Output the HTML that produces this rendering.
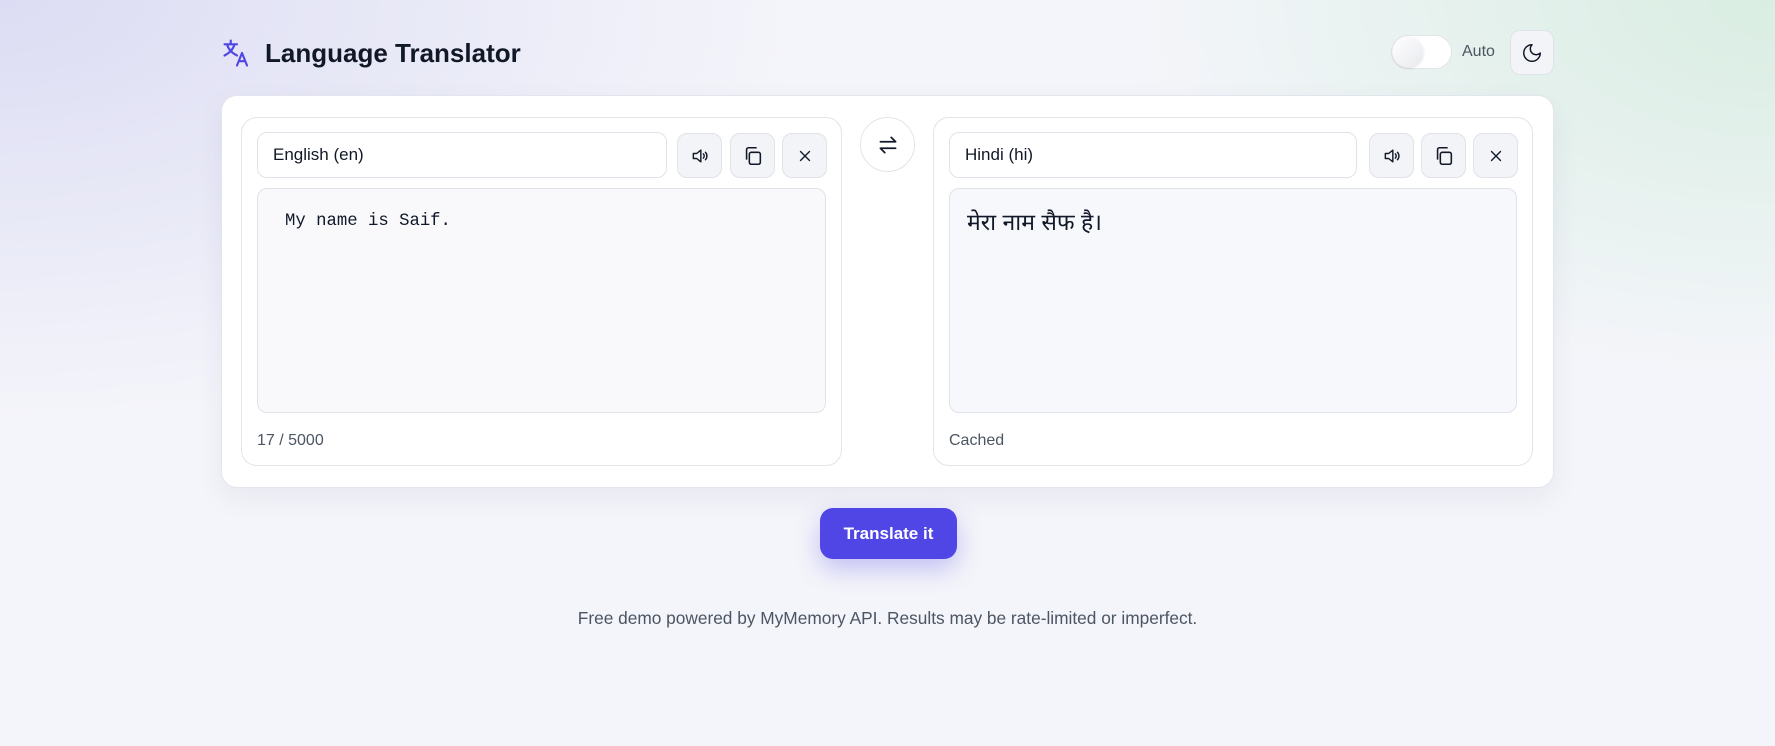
<!DOCTYPE html>
<html><head><meta charset="utf-8"><style>
*{box-sizing:border-box;margin:0;padding:0}
body{width:1775px;height:746px;overflow:hidden;font-family:"Liberation Sans",sans-serif;color:#0f172a;
background:radial-gradient(ellipse 800px 420px at 0px 0px,rgba(214,214,242,.8),rgba(214,214,242,0)),radial-gradient(ellipse 650px 380px at 1775px 0px,rgba(212,236,222,.85),rgba(212,236,222,0)),#f4f5fa;position:relative}
.abs{position:absolute}
.title{left:265px;top:38px;font-size:26px;font-weight:700;color:#111827}
.card{left:221px;top:95px;width:1333px;height:393px;background:#fff;border:1px solid #e3e5ec;border-radius:16px;box-shadow:0 10px 30px rgba(30,40,80,.06)}
.panel{top:117px;width:601px;height:349px;border:1px solid #e2e4ea;border-radius:16px;background:#fff}
.sel{top:132px;height:46px;border:1px solid #dfe2e8;border-radius:10px;background:#fff;font-size:17px;padding-left:15px;line-height:44px;color:#111827}
.btn{top:133px;width:45px;height:45px;border:1px solid #dfe2e8;border-radius:10px;background:#f3f4f8;display:flex;align-items:center;justify-content:center}
.ta{top:188px;width:569px;height:225px;border:1px solid #dfe2e8;border-radius:10px;background:#f9f9fc}
.meta{top:432px;font-size:16px;color:#4b5563}
</style></head><body>
<svg class="abs" style="left:222px;top:38px" width="30" height="30" viewBox="0 0 24 24" fill="none" stroke="#4f46e5" stroke-width="1.7" stroke-linecap="round" stroke-linejoin="round"><path d="M2 5h10M7 2v3M4 5c1 4 4 7 8 9M10 5c-1 4-4 7-8 9"/><path d="M12 22l4-10 4 10M13.5 18.5h5"/></svg>
<div class="abs title">Language Translator</div>
<div class="abs" style="left:1391px;top:35px;width:61px;height:34px;border-radius:17px;background:#fff;border:1px solid #e2e4ea"></div>
<div class="abs" style="left:1393px;top:37px;width:30px;height:30px;border-radius:50%;background:linear-gradient(135deg,#fff,#e8e9ee);box-shadow:0 1px 3px rgba(0,0,0,.15)"></div>
<div class="abs" style="left:1462px;top:43px;font-size:16px;color:#4b5563">Auto</div>
<div class="abs" style="left:1510px;top:30px;width:44px;height:45px;border:1px solid #dfe2e8;border-radius:10px;background:#f3f4f8;display:flex;align-items:center;justify-content:center"><svg width="22" height="22" viewBox="0 0 24 24" fill="none" stroke="#111827" stroke-width="1.6" stroke-linecap="round" stroke-linejoin="round"><path d="M12 3a6 6 0 0 0 9 9 9 9 0 1 1-9-9z"/></svg></div>
<div class="abs card"></div>
<div class="abs panel" style="left:241px"></div>
<div class="abs panel" style="left:933px;width:600px"></div>
<div class="abs sel" style="left:257px;width:410px">English (en)</div>
<div class="abs sel" style="left:949px;width:408px">Hindi (hi)</div>
<div class="abs btn" style="left:677px"><svg width="20" height="20" viewBox="0 0 24 24" fill="none" stroke="#111827" stroke-width="1.7" stroke-linejoin="round" stroke-linecap="round"><path d="M4 9h4l5-4v14l-5-4H4z"/><path d="M16 9.5a3.5 3.5 0 0 1 0 5M18.5 7.5a6.5 6.5 0 0 1 0 9"/></svg></div>
<div class="abs btn" style="left:730px"><svg width="22" height="22" viewBox="0 0 24 24" fill="none" stroke="#111827" stroke-width="1.7"><rect x="8" y="8" width="12" height="13" rx="2"/><path d="M5 16V5a2 2 0 0 1 2-2h9"/></svg></div>
<div class="abs btn" style="left:782px"><svg width="18" height="18" viewBox="0 0 24 24" fill="none" stroke="#111827" stroke-width="1.8" stroke-linecap="round"><path d="M6 6l12 12M18 6L6 18"/></svg></div>
<div class="abs btn" style="left:1369px"><svg width="20" height="20" viewBox="0 0 24 24" fill="none" stroke="#111827" stroke-width="1.7" stroke-linejoin="round" stroke-linecap="round"><path d="M4 9h4l5-4v14l-5-4H4z"/><path d="M16 9.5a3.5 3.5 0 0 1 0 5M18.5 7.5a6.5 6.5 0 0 1 0 9"/></svg></div>
<div class="abs btn" style="left:1421px"><svg width="22" height="22" viewBox="0 0 24 24" fill="none" stroke="#111827" stroke-width="1.7"><rect x="8" y="8" width="12" height="13" rx="2"/><path d="M5 16V5a2 2 0 0 1 2-2h9"/></svg></div>
<div class="abs btn" style="left:1473px"><svg width="18" height="18" viewBox="0 0 24 24" fill="none" stroke="#111827" stroke-width="1.8" stroke-linecap="round"><path d="M6 6l12 12M18 6L6 18"/></svg></div>
<div class="abs ta" style="left:257px"></div>
<div class="abs ta" style="left:949px;width:568px;background:#f7f8fc"></div>
<div class="abs" style="left:285px;top:212px;font-family:'Liberation Mono',monospace;font-size:17.3px;color:#111827">My name is Saif.</div>
<div class="abs" style="left:967px;top:205px;font-family:'Liberation Sans','Noto Sans CJK SC',sans-serif;font-size:23px;color:#111827">मेरा नाम सैफ है।</div>
<div class="abs meta" style="left:257px">17 / 5000</div>
<div class="abs meta" style="left:949px">Cached</div>
<div class="abs" style="left:860px;top:117px;width:55px;height:55px;border-radius:50%;border:1px solid #e2e4ea;background:#fff;display:flex;align-items:center;justify-content:center"><svg width="26" height="26" viewBox="0 0 24 24" fill="none" stroke="#111827" stroke-width="1.6" stroke-linecap="round" stroke-linejoin="round"><path d="M5 9h14l-4-4M19 15H5l4 4"/></svg></div>
<div class="abs" style="left:820px;top:508px;width:137px;height:51px;border-radius:13px;background:#4f46e5;box-shadow:0 10px 25px rgba(79,70,229,.3);color:#fff;font-weight:700;font-size:17px;display:flex;align-items:center;justify-content:center">Translate it</div>
<div class="abs" style="left:0;width:1775px;top:608px;text-align:center;font-size:17.3px;color:#4b5563">Free demo powered by MyMemory API. Results may be rate-limited or imperfect.</div>
</body></html>
